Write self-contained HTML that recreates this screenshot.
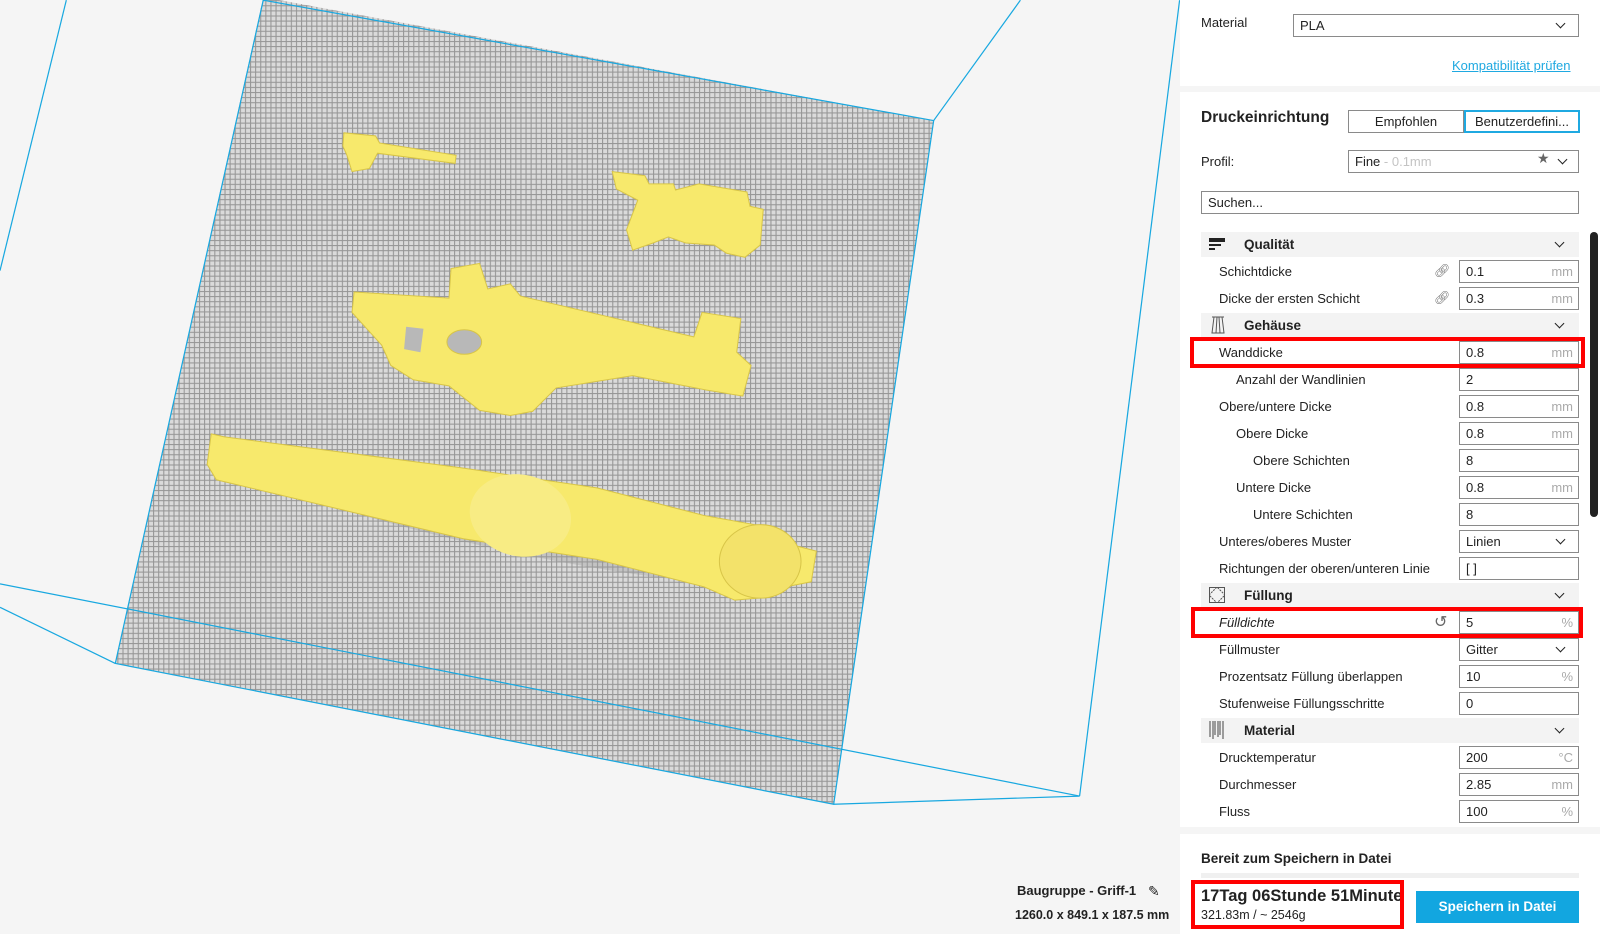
<!DOCTYPE html>
<html><head><meta charset="utf-8"><style>
*{margin:0;padding:0;box-sizing:border-box}
body{width:1600px;height:934px;overflow:hidden;background:#f5f5f5;font-family:"Liberation Sans",sans-serif;color:#222;position:relative}
.a{position:absolute}
.panel{position:absolute;left:1180px;background:#fff;width:420px}
.lbl{position:absolute;font-size:13px;color:#222;white-space:nowrap}
.inp{position:absolute;left:1459px;width:120px;height:23px;border:1px solid #8a8a8a;background:#fff;font-size:13px;padding:3px 6px;color:#222}
.inp .u{position:absolute;right:5px;top:3px;color:#aaa}
.hd{position:absolute;left:1201px;width:378px;height:25px;background:#f3f3f3}
.hd b{position:absolute;left:43px;top:5px;font-size:13.5px;color:#222}
.chev{position:absolute;width:7px;height:7px;border-right:1.6px solid #222;border-bottom:1.6px solid #222;transform:rotate(45deg)}
.red{position:absolute;border:4px solid #f00}
</style></head><body>
<svg class="a" style="left:0;top:0" width="1600" height="934" viewBox="0 0 1568 915">
<defs><pattern id="g" width="5" height="5" patternUnits="userSpaceOnUse"><rect width="5" height="5" fill="#dadada"/><path d="M0 .5H5M.5 0V5" stroke="#969696" stroke-width="1.1"/></pattern></defs>
<polygon points="258,-3 915,118 817,788 113,650" fill="url(#g)"/>
<g stroke="#18a8e0" stroke-width="1.2" fill="none">
<polyline points="258,0 915,118 817,788 113,650 258,0"/>
<line x1="65" y1="0" x2="0" y2="265"/><line x1="1000" y1="0" x2="915" y2="118"/>
<line x1="0" y1="572" x2="1058" y2="780"/><line x1="0" y1="595" x2="113" y2="650"/>
<line x1="817" y1="788" x2="1058" y2="780"/><line x1="1156" y1="0" x2="1058" y2="780"/>
</g>
<g fill="#9a9a9a" opacity=".35">
<ellipse cx="540" cy="330" rx="180" ry="25" transform="rotate(10 540 330)"/>
<ellipse cx="500" cy="510" rx="260" ry="30" transform="rotate(12 500 510)"/>
</g>
<g fill="#f7e96c" stroke="#d8c548" stroke-width="1">
<polygon points="337,130 368,133 372,140 447,152 446,160 370,150 362,165 345,168 340,152 336,143"/>
<polygon points="600,168 632,172 636,180 660,180 662,186 685,180 732,188 735,202 748,205 745,240 730,252 712,248 700,240 672,238 655,232 640,238 620,245 614,225 625,196 604,185"/>
<polygon points="347,286 440,292 442,263 470,258 478,283 500,278 510,290 680,330 688,306 726,312 722,345 736,358 728,388 692,382 620,368 545,380 522,403 500,407 470,402 440,378 405,372 383,358 374,338 345,306"/>
<polygon points="207,425 220,428 450,458 585,478 690,505 745,515 762,530 800,540 795,570 770,575 755,585 720,588 690,575 585,548 455,528 212,470 203,455"/>
</g>
<ellipse cx="455" cy="335" rx="17" ry="12" fill="#b8b8b8" stroke="#d8c548"/>
<polygon points="398,320 415,322 412,345 396,342" fill="#b8b8b8"/>
<ellipse cx="510" cy="505" rx="50" ry="40" transform="rotate(12 510 505)" fill="#f8ec84"/>
<ellipse cx="745" cy="550" rx="40" ry="36" fill="#f3e26a" stroke="#d8c548"/>
</svg>

<div class="a" style="left:1017px;top:883px;font-size:13px;font-weight:bold">Baugruppe - Griff-1</div>
<div class="a" style="left:1148px;top:883px;font-size:14px">✎</div>
<div class="a" style="left:1015px;top:908px;font-size:12.5px;font-weight:bold">1260.0 x 849.1 x 187.5 mm</div>

<div class="panel" style="top:0;height:86px"></div>
<div class="panel" style="top:92px;height:735px"></div>
<div class="panel" style="top:834px;height:100px"></div>

<div class="lbl" style="left:1201px;top:15px">Material</div>
<div class="inp" style="left:1293px;top:14px;width:286px">PLA</div><div class="chev" style="left:1557px;top:20px"></div>
<div class="lbl" style="left:1452px;top:58px;color:#1fa9e1;text-decoration:underline">Kompatibilität prüfen</div>

<div class="lbl" style="left:1201px;top:109px;font-size:15.5px;font-weight:bold">Druckeinrichtung</div>
<div class="a" style="left:1348px;top:110px;width:116px;height:23px;border:1px solid #8a8a8a;font-size:13px;text-align:center;line-height:21px">Empfohlen</div>
<div class="a" style="left:1464px;top:110px;width:116px;height:23px;border:2px solid #1fa9e1;font-size:13px;text-align:center;line-height:19px">Benutzerdefini...</div>
<div class="lbl" style="left:1201px;top:154px">Profil:</div>
<div class="inp" style="left:1348px;top:150px;width:231px">Fine <span style="color:#c4c4c4">- 0.1mm</span></div>
<div class="a" style="left:1537px;top:150px;font-size:14px;color:#666">★</div><div class="chev" style="left:1559px;top:156px"></div>
<div class="inp" style="left:1201px;top:191px;width:378px">Suchen...</div>

<div class="a" style="left:1590px;top:232px;width:8px;height:285px;background:#222;border-radius:4px"></div>

<div class="hd" style="top:232px"><svg class="a" style="left:8px;top:6px" width="16" height="14"><rect width="16" height="4" fill="#222"/><rect y="6" width="12" height="2" fill="#222"/><rect y="10" width="6" height="2" fill="#222"/></svg><b>Qualität</b><div class="chev" style="left:355px;top:7px"></div></div>
<div class="lbl" style="left:1219px;top:264px">Schichtdicke</div><div class="lbl" style="left:1434px;top:263px;color:#777">🔗︎</div><div class="inp" style="top:260px">0.1<span class="u">mm</span></div>
<div class="lbl" style="left:1219px;top:291px">Dicke der ersten Schicht</div><div class="lbl" style="left:1434px;top:290px;color:#777">🔗︎</div><div class="inp" style="top:287px">0.3<span class="u">mm</span></div>
<div class="hd" style="top:313px"><svg class="a" style="left:10px;top:3px" width="14" height="18" fill="none" stroke="#555"><path d="M1 1H13M3 1L1 17H13L11 1M6 1L5 17M8 1L9 17"/></svg><b>Gehäuse</b><div class="chev" style="left:355px;top:7px"></div></div>
<div class="lbl" style="left:1219px;top:345px">Wanddicke</div><div class="inp" style="top:341px">0.8<span class="u">mm</span></div>
<div class="lbl" style="left:1236px;top:372px">Anzahl der Wandlinien</div><div class="inp" style="top:368px">2</div>
<div class="lbl" style="left:1219px;top:399px">Obere/untere Dicke</div><div class="inp" style="top:395px">0.8<span class="u">mm</span></div>
<div class="lbl" style="left:1236px;top:426px">Obere Dicke</div><div class="inp" style="top:422px">0.8<span class="u">mm</span></div>
<div class="lbl" style="left:1253px;top:453px">Obere Schichten</div><div class="inp" style="top:449px">8</div>
<div class="lbl" style="left:1236px;top:480px">Untere Dicke</div><div class="inp" style="top:476px">0.8<span class="u">mm</span></div>
<div class="lbl" style="left:1253px;top:507px">Untere Schichten</div><div class="inp" style="top:503px">8</div>
<div class="lbl" style="left:1219px;top:534px">Unteres/oberes Muster</div><div class="inp" style="top:530px">Linien</div><div class="chev" style="left:1557px;top:536px"></div>
<div class="lbl" style="left:1219px;top:561px">Richtungen der oberen/unteren Linie</div><div class="inp" style="top:557px">[ ]</div>
<div class="hd" style="top:583px"><svg class="a" style="left:8px;top:4px" width="16" height="16" fill="none" stroke="#555"><rect x=".5" y=".5" width="15" height="15"/><path d="M0 8L8 0L16 8L8 16Z" stroke-dasharray="2 1"/></svg><b>Füllung</b><div class="chev" style="left:355px;top:7px"></div></div>
<div class="lbl" style="left:1219px;top:615px;font-style:italic">Fülldichte</div><div class="lbl" style="left:1434px;top:612px;font-size:16px;color:#666">↺</div><div class="inp" style="top:611px">5<span class="u">%</span></div>
<div class="lbl" style="left:1219px;top:642px">Füllmuster</div><div class="inp" style="top:638px">Gitter</div><div class="chev" style="left:1557px;top:644px"></div>
<div class="lbl" style="left:1219px;top:669px">Prozentsatz Füllung überlappen</div><div class="inp" style="top:665px">10<span class="u">%</span></div>
<div class="lbl" style="left:1219px;top:696px">Stufenweise Füllungsschritte</div><div class="inp" style="top:692px">0</div>
<div class="hd" style="top:718px"><svg class="a" style="left:8px;top:3px" width="16" height="18" stroke="#444"><path d="M1 0V16M4 0V18M6 0V14M9 0V16M11 0V14M14 0V18"/></svg><b>Material</b><div class="chev" style="left:355px;top:7px"></div></div>
<div class="lbl" style="left:1219px;top:750px">Drucktemperatur</div><div class="inp" style="top:746px">200<span class="u">°C</span></div>
<div class="lbl" style="left:1219px;top:777px">Durchmesser</div><div class="inp" style="top:773px">2.85<span class="u">mm</span></div>
<div class="lbl" style="left:1219px;top:804px">Fluss</div><div class="inp" style="top:800px">100<span class="u">%</span></div>

<div class="red" style="left:1190px;top:337px;width:395px;height:31px"></div>
<div class="red" style="left:1191px;top:607px;width:392px;height:31px"></div>

<div class="lbl" style="left:1201px;top:851px;font-weight:bold;font-size:13.5px">Bereit zum Speichern in Datei</div>
<div class="a" style="left:1201px;top:873px;width:378px;height:5px;background:#f0f0f0"></div>
<div class="red" style="left:1191px;top:880px;width:213px;height:49px;overflow:hidden">
<div style="position:absolute;left:6px;top:3px;font-size:16.5px;font-weight:bold;white-space:nowrap;width:199px;overflow:hidden">17Tag 06Stunde 51Minuten</div>
<div style="position:absolute;left:6px;top:24px;font-size:12.5px;white-space:nowrap">321.83m / ~ 2546g</div></div>
<div class="a" style="left:1416px;top:891px;width:163px;height:32px;background:#12a6e0;color:#fff;font-weight:bold;font-size:13.5px;text-align:center;line-height:32px">Speichern in Datei</div>
</body></html>
